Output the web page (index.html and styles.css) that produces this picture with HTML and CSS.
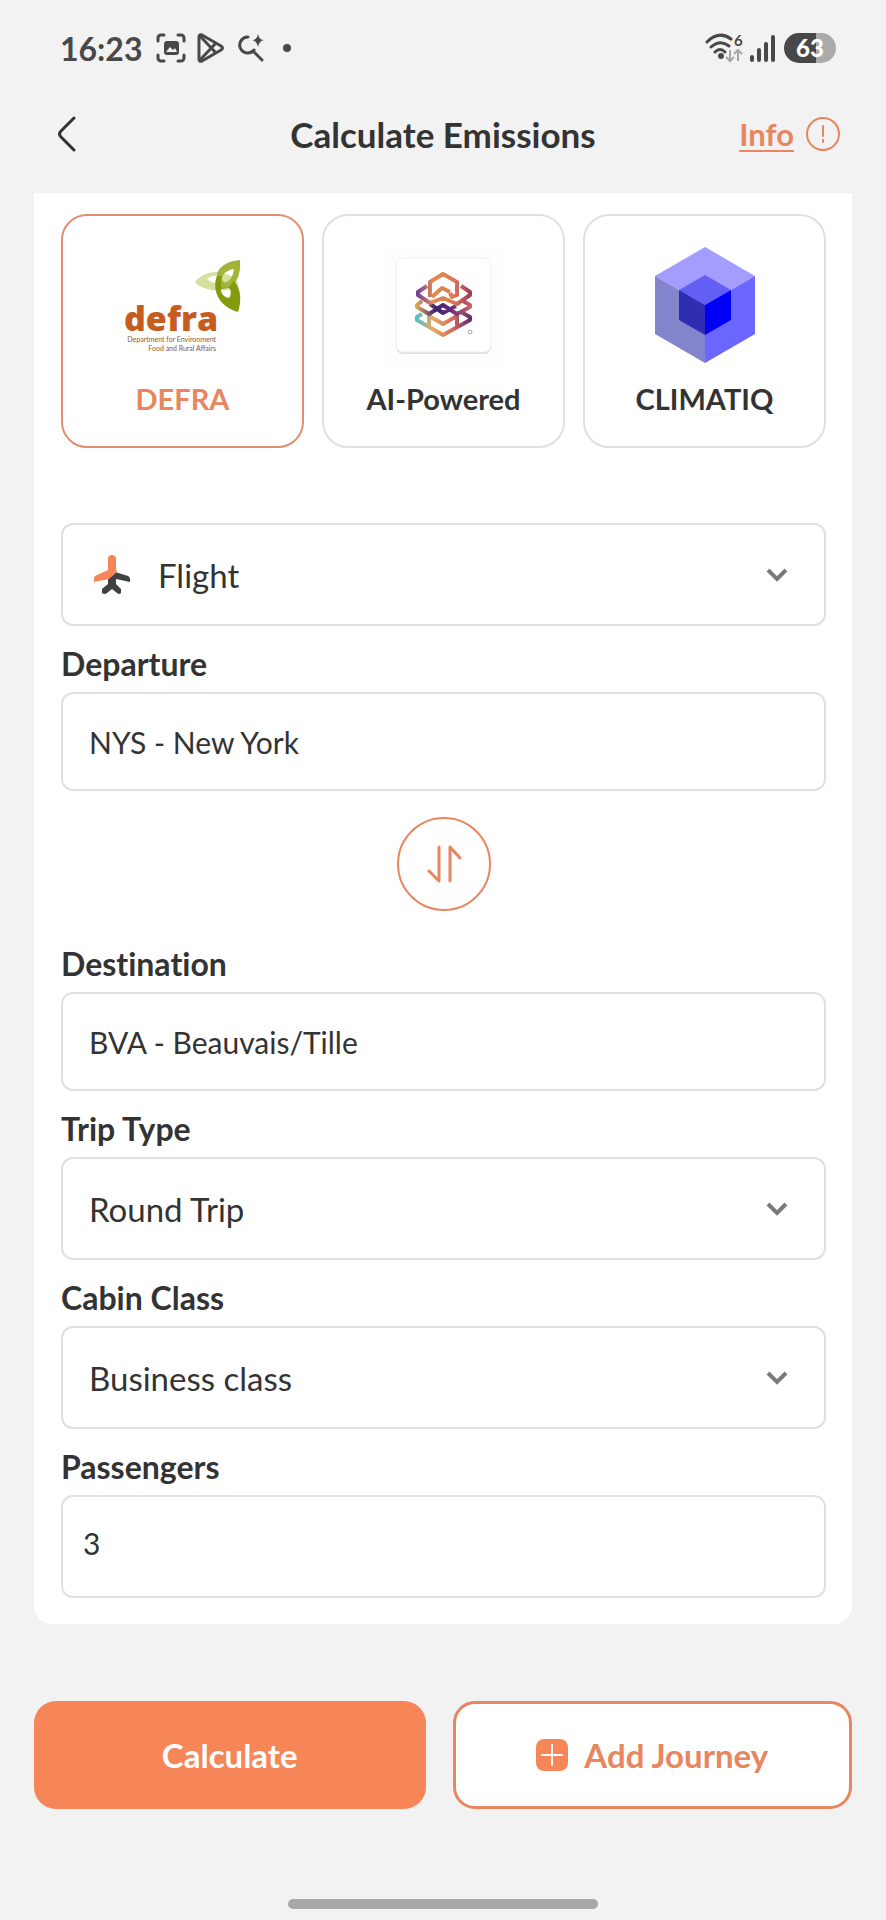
FILE: index.html
```html
<!DOCTYPE html>
<html lang="en">
<head>
<meta charset="utf-8">
<meta name="viewport" content="width=device-width, initial-scale=1">
<title>Calculate Emissions</title>
<link rel="stylesheet" href="styles.css">
</head>
<body>
<div class="screen">
  <div class="status">
    <div class="status-left">
      <span class="clock">16:23</span>
      <svg class="status-icon" viewBox="0 0 30 30" width="30" height="30" aria-hidden="true">
        <g fill="none" stroke="#484848" stroke-width="3" stroke-linecap="round">
          <path d="M2 8V5a3 3 0 0 1 3-3h3M22 2h3a3 3 0 0 1 3 3v3M28 22v3a3 3 0 0 1-3 3h-3M8 28H5a3 3 0 0 1-3-3v-3"/>
        </g>
        <rect x="8" y="8" width="15" height="14" rx="3" fill="#484848"/>
        <path d="M10 19l4-5 3 3 2-2 2 4z" fill="#f2f2f2"/>
      </svg>
      <svg class="status-icon" viewBox="0 0 30 30" width="30" height="30" aria-hidden="true">
        <g fill="none" stroke="#484848" stroke-width="3" stroke-linejoin="round">
          <path d="M3 4v22q0 3 3 2l19-11q3-2 0-4L6 2Q3 1 3 4z"/>
          <path d="M4 3l16 17M4 27l16-17"/>
        </g>
      </svg>
      <svg class="status-icon" viewBox="0 0 30 30" width="30" height="30" aria-hidden="true">
        <g fill="none" stroke="#484848" stroke-width="3" stroke-linecap="round">
          <path d="M12 4a8 8 0 1 0 6 13M17 18l9 9"/>
        </g>
        <path d="M22 1q1 6 6 6q-5 1-6 7q-1-6-6-7q5 0 6-6z" fill="#484848"/>
      </svg>
      <span class="dot"></span>
    </div>
    <div class="status-right">
      <svg viewBox="0 0 40 32" width="40" height="32" aria-hidden="true">
        <g fill="none" stroke="#484848" stroke-width="3" stroke-linecap="round">
          <path d="M3 10Q15-2 27 7M7 15Q16 7 25 14M11 20Q16 15 21 20"/>
        </g>
        <circle cx="17" cy="24" r="3" fill="#484848"/>
        <path d="M26 18v11m-4-4l4 4 4-4M34 29V18m-4 4l4-4 4 4" fill="none" stroke="#a6a6a6" stroke-width="2"/>
        <text x="30" y="14" class="wifi-gen">6</text>
      </svg>
      <svg viewBox="0 0 26 30" width="26" height="30" aria-hidden="true">
        <path d="M2 24v3M9 17v10M16 11v16M23 4v23" fill="none" stroke="#484848" stroke-width="4" stroke-linecap="round"/>
      </svg>
      <span class="battery">63</span>
    </div>
  </div>

  <header class="header">
    <button class="back" type="button" aria-label="Back">
      <svg viewBox="0 0 20 36" width="20" height="36" aria-hidden="true"><path d="M17 2L4 15q-3 3 0 6l13 13" fill="none" stroke="#333" stroke-width="3" stroke-linecap="round"/></svg>
    </button>
    <h1 class="title">Calculate Emissions</h1>
    <a class="info" href="#info"><span class="info-text">Info</span>
      <svg viewBox="0 0 36 36" width="36" height="36" aria-hidden="true">
        <circle cx="18" cy="18" r="16" fill="none" stroke="#e8865f" stroke-width="2"/>
        <path d="M18 10v10M18 24v2" stroke="#e8865f" stroke-width="2" stroke-linecap="round"/>
      </svg>
    </a>
  </header>

  <form class="form">
    <div class="card">
      <div class="providers">
        <button class="provider selected" type="button" aria-pressed="true">
          <svg viewBox="0 0 120 118" width="120" height="118" aria-hidden="true">
            <path fill="#d5dfa0" fill-rule="evenodd" d="M72 36C80 26 95 24 103 28C112 31 117 37 115 41C104 46 82 47 72 36ZM84 33C88 37 94 38 98 35C100 33 96 30 92 30C88 30 86 31 84 33Z"/>
            <path fill="#a3b338" fill-rule="evenodd" d="M117 14C103 15 94 22 94 30C93 38 99 44 105 42C114 38 118 28 117 14ZM111 23C104 24 99 28 99 33C100 39 109 37 111 23Z"/>
            <path fill="#859a0c" fill-rule="evenodd" d="M94 30C89 42 94 60 115 66C119 55 118 40 110 35C109 39 106 42 99 42C97 39 98 34 99 30ZM98 43C98 48 101 51 106 52C109 48 108 43 105 41C103 42 100 43 98 43Z"/>
            <text x="1" y="85" class="defra-name">defra</text>
            <text x="93" y="96" text-anchor="end" class="defra-sub">Department for Environment</text>
            <text x="93" y="105" text-anchor="end" class="defra-sub">Food and Rural Affairs</text>
          </svg>
          <span class="provider-name">DEFRA</span>
        </button>
        <button class="provider" type="button" aria-pressed="false">
          <svg viewBox="0 0 120 118" width="120" height="118" aria-hidden="true">
            <defs>
              <linearGradient id="g1" gradientUnits="userSpaceOnUse" x1="33" y1="0" x2="86" y2="0"><stop offset="0" stop-color="#6c3fa0"/><stop offset=".3" stop-color="#e58a4e"/><stop offset=".7" stop-color="#d9785a"/><stop offset="1" stop-color="#a63a5c"/></linearGradient>
              <linearGradient id="g2" gradientUnits="userSpaceOnUse" x1="33" y1="0" x2="86" y2="0"><stop offset="0" stop-color="#dba656"/><stop offset=".35" stop-color="#3d2270"/><stop offset=".65" stop-color="#6a2c78"/><stop offset="1" stop-color="#c9606c"/></linearGradient>
              <linearGradient id="g3" gradientUnits="userSpaceOnUse" x1="33" y1="0" x2="86" y2="0"><stop offset="0" stop-color="#55bfc8"/><stop offset=".3" stop-color="#e8a860"/><stop offset=".65" stop-color="#d9705a"/><stop offset="1" stop-color="#6b2c73"/></linearGradient>
            </defs>
            <rect x="1" y="0" width="118" height="118" fill="#fdfdfd"/>
            <rect x="12" y="14" width="95" height="94" rx="7" fill="#ddd"/>
            <rect x="12" y="12" width="95" height="94" rx="7" fill="#fff" stroke="#f0f0f0"/>
            <g fill="none" stroke-width="4" stroke-linejoin="round">
              <path stroke="url(#g3)" d="M38 68L33 71V74L59 89L86 74V71L77 66M45 82V68M73 82V68M45 70L59 78L73 70"/>
              <path stroke="url(#g2)" d="M38 55L33 59V61L45 68L59 59L73 68L86 61V59L79 55M46 58L59 67L72 60"/>
              <path stroke="url(#g1)" d="M43 40L34 46V49L46 57L59 52L73 58L86 49V46L77 40M46 51V36L59 28L73 36V49L68 51L66 47M48 51L58 42L66 46"/>
            </g>
            <circle cx="86" cy="86" r="2" fill="none" stroke="#b5a29b"/>
          </svg>
          <span class="provider-name">AI-Powered</span>
        </button>
        <button class="provider" type="button" aria-pressed="false">
          <svg viewBox="-10 -1 120 118" width="120" height="118" aria-hidden="true">
            <path fill="#a59cff" d="M50 0L100 29L50 58L0 29z"/>
            <path fill="#8484cc" d="M0 29L50 58V116L0 87z"/>
            <path fill="#6b66ff" d="M100 29L50 58V116L100 87z"/>
            <path fill="#625ff5" d="M50 28L76 43L50 58L24 43z"/>
            <path fill="#2f2db2" d="M24 43L50 58V88L24 73z"/>
            <path fill="#0000fa" d="M76 43L50 58V88L76 73z"/>
          </svg>
          <span class="provider-name">CLIMATIQ</span>
        </button>
      </div>

      <div class="select">
        <select class="control control-icon" aria-label="Journey type"><option>Flight</option></select>
        <svg class="mode" viewBox="0 0 38 42" width="38" height="42" aria-hidden="true">
          <path fill="#414141" d="M19 17L35 22Q37 23 37 25V28L23 25V30L28 35V39Q26 41 24 39L19 35L14 39Q12 41 9 39V35L15 30V22z"/>
          <path fill="#f68657" d="M15 5Q15 1 19 1T23 5V15L24 18L16 25L1 28V24Q1 22 4 21L15 16z"/>
        </svg>
        <svg class="arrow" viewBox="0 0 24 16" width="24" height="16" aria-hidden="true"><path d="M3 3l9 9 9-9" fill="none" stroke="#7a7a7a" stroke-width="4"/></svg>
      </div>

      <label class="label" for="departure">Departure</label>
      <input class="control" id="departure" type="text" value="NYS - New York">

      <button class="swap" type="button" aria-label="Swap departure and destination">
        <svg viewBox="0 0 36 40" width="36" height="40" aria-hidden="true"><path d="M13 3v34L3 27M24 37V3l10 11" fill="none" stroke="#e8865f" stroke-width="3" stroke-linecap="round" stroke-linejoin="round"/></svg>
      </button>

      <label class="label" for="destination">Destination</label>
      <input class="control" id="destination" type="text" value="BVA - Beauvais/Tille">

      <label class="label" for="trip">Trip Type</label>
      <div class="select">
        <select class="control" id="trip"><option>Round Trip</option></select>
        <svg class="arrow" viewBox="0 0 24 16" width="24" height="16" aria-hidden="true"><path d="M3 3l9 9 9-9" fill="none" stroke="#7a7a7a" stroke-width="4"/></svg>
      </div>

      <label class="label" for="cabin">Cabin Class</label>
      <div class="select">
        <select class="control" id="cabin"><option>Business class</option></select>
        <svg class="arrow" viewBox="0 0 24 16" width="24" height="16" aria-hidden="true"><path d="M3 3l9 9 9-9" fill="none" stroke="#7a7a7a" stroke-width="4"/></svg>
      </div>

      <label class="label" for="passengers">Passengers</label>
      <input class="control control-count" id="passengers" type="text" inputmode="numeric" value="3">
    </div>

    <div class="actions">
      <button class="action primary" type="submit">Calculate</button>
      <button class="action secondary" type="button">
        <svg viewBox="0 0 32 32" width="32" height="32" aria-hidden="true">
          <rect width="32" height="32" rx="8" fill="#f68657"/>
          <path d="M16 6v20M6 16h20" stroke="#fff" stroke-width="2" stroke-linecap="round"/>
        </svg>
        Add Journey
      </button>
    </div>
  </form>
  <div class="home"></div>
</div>
</body>
</html>
```

FILE: styles.css
```css
* { box-sizing: border-box; }

body {
  margin: 0;
  background: #f2f2f2;
  color: #333;
  font-family: Lato, "Open Sans", sans-serif;
  font-size: 33px;
  font-variant-ligatures: none;
}

button, input, select { font: inherit; color: inherit; }
button { padding: 0; border: 0; background: none; cursor: pointer; }
svg { display: block; flex: none; }

.screen {
  min-height: 100vh;
  display: flex;
  flex-direction: column;
}

.status {
  height: 96px;
  padding: 0 50px 0 60px;
  display: flex;
  align-items: center;
  justify-content: space-between;
  color: #484848;
}
.status-left { display: flex; align-items: center; }
.clock { font-size: 32px; font-weight: 700; margin-right: 14px; }
.status-icon { margin-right: 10px; }
.dot { width: 8px; height: 8px; margin-left: 7px; border-radius: 50%; background: #484848; }
.status-right { display: flex; align-items: center; gap: 6px; }
.wifi-gen { font: 700 15px Lato, sans-serif; fill: #484848; }
.battery {
  width: 52px;
  margin-left: 2px;
  border-radius: 15px;
  background: linear-gradient(90deg, #484848 62%, #aaa 62%);
  color: #fff;
  font-size: 24px;
  font-weight: 900;
  line-height: 30px;
  text-align: center;
}

.header {
  height: 76px;
  margin-bottom: 21px;
  padding: 0 45px;
  display: grid;
  grid-template-columns: 1fr auto 1fr;
  align-items: center;
}
.back { justify-self: start; padding-left: 12px; }
.title { margin: 0; font-size: 35px; font-weight: 700; line-height: 40px; }
.info {
  justify-self: end;
  display: flex;
  align-items: center;
  gap: 11px;
  color: #e8865f;
  font-size: 31px;
  font-weight: 700;
  line-height: 36px;
  text-decoration: none;
}
.info-text { text-decoration: underline; text-decoration-thickness: 2px; text-underline-offset: 4px; }

.form { margin: 0 34px; }
.card {
  display: flex;
  flex-direction: column;
  padding: 21px 26px 26px 27px;
  background: #fff;
  border-radius: 0 0 18px 18px;
}

.providers {
  display: grid;
  grid-template-columns: repeat(3, 1fr);
  gap: 18px;
  margin-bottom: 75px;
}
.provider {
  display: flex;
  flex-direction: column;
  align-items: center;
  gap: 17px;
  padding: 30px 0 29px;
  border: 2px solid #e0e0e0;
  border-radius: 26px;
}
.provider-name { font-size: 29px; font-weight: 700; line-height: 36px; }
.selected { border-color: #e0906f; }
.selected .provider-name { color: #e8865f; }
.defra-name { font: 800 34px "Open Sans", sans-serif; fill: #c65d1e; }
.defra-sub { font: 7px Lato, sans-serif; fill: #8a5a35; }

.label {
  padding-top: 20px;
  margin-bottom: 10px;
  font-size: 32px;
  font-weight: 700;
  line-height: 36px;
}
.control {
  width: 100%;
  height: 99px;
  padding: 0 26px;
  border: 2px solid #e0e0e0;
  border-radius: 12px;
  background: #fff;
  font-size: 30px;
  outline: 0;
}
.select { display: grid; align-items: center; }
.select > * { grid-area: 1 / 1; }
.select .control { height: 103px; font-size: 33px; appearance: none; }
.select .control-icon { padding-left: 95px; }
.mode { margin-left: 32px; pointer-events: none; }
.arrow { justify-self: end; margin-right: 37px; pointer-events: none; }
.control-count { height: 103px; padding: 0 20px 8px; }

.swap {
  align-self: center;
  width: 94px;
  height: 94px;
  margin: 26px 0 15px;
  display: grid;
  place-items: center;
  border: 2px solid #e8865f;
  border-radius: 50%;
}

.actions {
  display: grid;
  grid-template-columns: 49fr 50fr;
  gap: 27px;
  margin-top: 77px;
}
.action {
  height: 108px;
  display: flex;
  align-items: center;
  justify-content: center;
  gap: 16px;
  border-radius: 22px;
  font-weight: 700;
}
.primary { background: #f68657; color: #fff; }
.secondary { border: 3px solid #e8865f; background: #fff; color: #e8865f; }

.home {
  width: 35%;
  height: 10px;
  margin: auto auto 11px;
  border-radius: 5px;
  background: #a8a8a8;
}
```
